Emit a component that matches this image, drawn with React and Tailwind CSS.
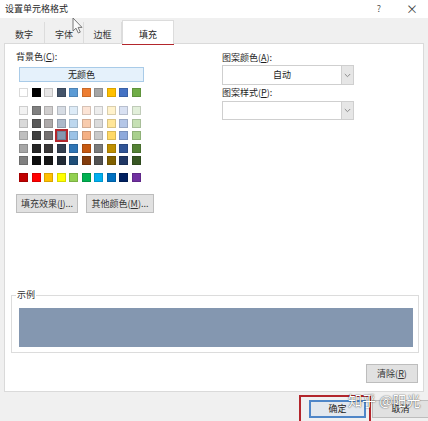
const THEME = [
  'bg-[#FFFFFF]', 'bg-[#000000]', 'bg-[#E7E6E6]', 'bg-[#44546A]', 'bg-[#5B9BD5]',
  'bg-[#ED7D31]', 'bg-[#A5A5A5]', 'bg-[#FFC000]', 'bg-[#4472C4]', 'bg-[#70AD47]',
];

const TINTS = [
  ['bg-[#F2F2F2]', 'bg-[#808080]', 'bg-[#D0CECE]', 'bg-[#D6DCE4]', 'bg-[#DDEBF7]', 'bg-[#FCE4D6]', 'bg-[#EDEDED]', 'bg-[#FFF2CC]', 'bg-[#D9E1F2]', 'bg-[#E2EFDA]'],
  ['bg-[#D9D9D9]', 'bg-[#595959]', 'bg-[#AEAAAA]', 'bg-[#ACB9CA]', 'bg-[#BDD7EE]', 'bg-[#F8CBAD]', 'bg-[#DBDBDB]', 'bg-[#FFE699]', 'bg-[#B4C6E7]', 'bg-[#C6E0B4]'],
  ['bg-[#BFBFBF]', 'bg-[#404040]', 'bg-[#757171]', 'bg-[#8497B0]', 'bg-[#9BC2E6]', 'bg-[#F4B084]', 'bg-[#C9C9C9]', 'bg-[#FFD966]', 'bg-[#8EA9DB]', 'bg-[#A9D08E]'],
  ['bg-[#A6A6A6]', 'bg-[#262626]', 'bg-[#3A3838]', 'bg-[#333F4F]', 'bg-[#2F75B5]', 'bg-[#C65911]', 'bg-[#7B7B7B]', 'bg-[#BF8F00]', 'bg-[#305496]', 'bg-[#548235]'],
  ['bg-[#808080]', 'bg-[#0D0D0D]', 'bg-[#161616]', 'bg-[#222B35]', 'bg-[#1F4E78]', 'bg-[#833C0C]', 'bg-[#525252]', 'bg-[#806000]', 'bg-[#203764]', 'bg-[#375623]'],
];

const STANDARD = [
  'bg-[#C00000]', 'bg-[#FF0000]', 'bg-[#FFC000]', 'bg-[#FFFF00]', 'bg-[#92D050]',
  'bg-[#00B050]', 'bg-[#00B0F0]', 'bg-[#0070C0]', 'bg-[#002060]', 'bg-[#7030A0]',
];

function Swatch({ color, selected }) {
  return (
    <div className={`relative w-[9px] h-[9px] border border-black/15 ${color}`}>
      {selected && (
        <div className="absolute -inset-[3px] border-2 border-[#b3262c]" />
      )}
    </div>
  );
}

function SwatchRow({ colors, selectedIndex = -1 }) {
  return (
    <div className="flex gap-[3.5px]">
      {colors.map((c, i) => (
        <Swatch key={i} color={c} selected={i === selectedIndex} />
      ))}
    </div>
  );
}

function Button({ children, className = '' }) {
  return (
    <div className={`h-[19px] flex items-center justify-center bg-[#e1e1e1] border border-[#bdbdbd] text-[#333] ${className}`}>
      {children}
    </div>
  );
}

function Chevron() {
  return (
    <svg width="7" height="5" viewBox="0 0 7 5">
      <path d="M0.8 1 L3.5 3.7 L6.2 1" fill="none" stroke="#8a8a8a" strokeWidth="1" />
    </svg>
  );
}

function Select({ value, className = '' }) {
  return (
    <div className={`w-[132px] flex border border-[#cfcfcf] bg-white ${className}`}>
      <div className="flex-1 flex items-center justify-center text-[#222]">{value}</div>
      <div className="w-[12px] flex items-center justify-center bg-[#e6e6e6] border-l border-[#cfcfcf]">
        <Chevron />
      </div>
    </div>
  );
}

function Tab({ label, className = '' }) {
  return (
    <div className={`h-[21px] flex items-end justify-center pb-[2px] border-r border-[#dcdcdc] text-[#333] ${className}`}>
      {label}
    </div>
  );
}

export default function App() {
  return (
    <div className="relative w-[428px] h-[421px] overflow-hidden bg-[#f0f0f0] text-[9px] leading-[12px] text-[#1e1e1e] font-['Noto_Sans_CJK_SC','Noto_Sans',sans-serif]">
      {/* title bar */}
      <div className="h-[18px] bg-white flex items-center pl-[5px]">
        <span>设置单元格格式</span>
        <span className="ml-auto text-[#555]">?</span>
        <span className="ml-[25px] mr-[10px] text-[12px] text-[#444]">×</span>
      </div>

      {/* tabs */}
      <div className="h-[25px] flex items-end pl-[4px]">
        <Tab label="数字" className="w-[41px]" />
        <Tab label="字体" className="w-[39px]" />
        <Tab label="边框" className="w-[38px]" />
        <div className="relative z-10 -mb-px w-[52px] h-[24px] flex items-end justify-center pb-[3px] bg-white border-x border-t border-[#dcdcdc] text-[#222]">
          填充
        </div>
      </div>

      {/* page body */}
      <div className="mx-[4px] h-[349px] bg-white border border-[#dadada] flex flex-col">
        <div className="flex pt-[7px]">
          {/* background colour */}
          <div className="w-[217px] pl-[11px] flex flex-col">
            <div>背景色(<span className="underline">C</span>):</div>
            <div className="ml-[3px] mt-[4px] w-[125px] h-[15px] flex items-center justify-center bg-[#e5f1fb] border border-[#a9cbe8] text-[#222]">
              无颜色
            </div>
            <div className="ml-[3px] mt-[6px]">
              <SwatchRow colors={THEME} />
            </div>
            <div className="ml-[3px] mt-[9px] flex flex-col gap-[3.5px]">
              {TINTS.map((row, r) => (
                <SwatchRow key={r} colors={row} selectedIndex={r === 2 ? 3 : -1} />
              ))}
            </div>
            <div className="ml-[3px] mt-[8px]">
              <SwatchRow colors={STANDARD} />
            </div>
            <div className="mt-[12px] flex gap-[8px]">
              <Button className="w-[62px]">填充效果(<span className="underline">I</span>)...</Button>
              <Button className="w-[68px]">其他颜色(<span className="underline">M</span>)...</Button>
            </div>
          </div>

          {/* pattern options */}
          <div className="flex flex-col">
            <div className="mt-[1px]">图案颜色(<span className="underline">A</span>):</div>
            <Select value="自动" className="mt-[1px] h-[20px]" />
            <div className="mt-[2px]">图案样式(<span className="underline">P</span>):</div>
            <Select value="" className="mt-[2px] h-[19px]" />
          </div>
        </div>

        {/* sample */}
        <div className="mt-auto flex flex-col pb-[8px]">
          <div className="relative ml-[6px] w-[408px] h-[58px] border border-[#dcdcdc]">
            <span className="absolute -top-[7px] left-[4px] bg-white px-[1px] text-[#333]">示例</span>
            <div className="mt-[12px] ml-[7px] mr-[5px] h-[39px] bg-[#8497b0]" />
          </div>
          <Button className="mt-[11px] self-end mr-[5px] w-[52px]">清除(<span className="underline">R</span>)</Button>
        </div>
      </div>

      {/* dialog buttons */}
      <div className="flex justify-end gap-[6px] pt-[8px] -mr-[1px]">
        <div className="w-[57px] h-[18px] flex items-center justify-center bg-[#e3e8ee] border-2 border-[#4f86c8] text-[#222]">
          确定
        </div>
        <div className="w-[57px] h-[18px] flex items-center justify-center bg-[#e1e1e1] border border-[#bdbdbd] text-[#222]">
          取消
        </div>
      </div>

      {/* highlight frames */}
      <div className="absolute left-[122px] top-[21px] w-[52px] h-[24px] border-2 border-[#b3262c]" />
      <div className="absolute left-[299px] top-[395px] w-[72px] h-[30px] border-2 border-[#b3262c]" />

      {/* mouse pointer */}
      <svg className="absolute left-[72px] top-[17px]" width="11" height="17" viewBox="0 0 11 17">
        <path d="M1 1 L1 14 L4 11.2 L6.3 16 L8.3 15.1 L6.1 10.4 L10 10.4 Z" fill="#fafafa" stroke="#6a6a6a" strokeWidth="0.9" strokeLinejoin="round" />
      </svg>

      {/* watermark */}
      <div className="absolute left-[348px] top-[392px] text-[14px] leading-[17px] text-white [text-shadow:0_0_1px_rgba(0,0,0,0.7),0_0_2px_rgba(0,0,0,0.4)]">
        知乎 @阳光
      </div>
    </div>
  );
}
